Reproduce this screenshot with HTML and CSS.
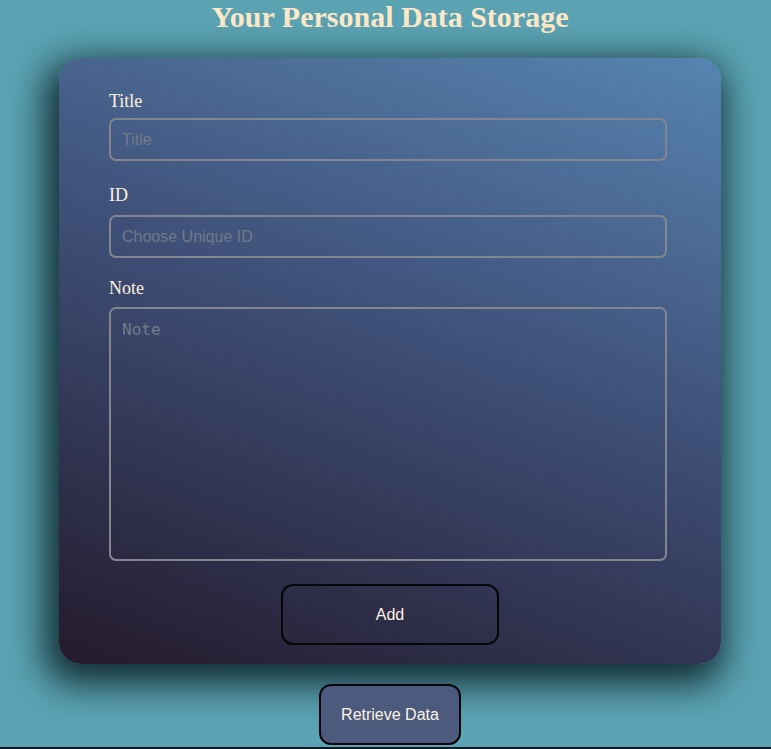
FILE: index.html
```html
<!DOCTYPE html>
<html>
<head>
<meta charset="utf-8">
<link rel="stylesheet" href="styles.css">
</head>
<body>
<div class="page">
  <h1 class="heading">Your Personal Data Storage</h1>
  <form class="card">
    <label class="label label-title" for="t">Title</label>
    <input class="field" id="t" type="text" placeholder="Title">
    <label class="label label-id" for="i">ID</label>
    <input class="field" id="i" type="text" placeholder="Choose Unique ID">
    <label class="label label-note" for="n">Note</label>
    <textarea class="note" id="n" placeholder="Note"></textarea>
    <div class="actions">
      <button type="button" class="btn-add">Add</button>
    </div>
  </form>
  <button type="button" class="btn-retrieve">Retrieve Data</button>
</div>
</body>
</html>
```
FILE: styles.css
```css
html, body {
  margin: 0;
  padding: 0;
}
body {
  background: #5ba3b3;
  height: 749px;
  overflow: hidden;
}
.page {
  height: 747px;
  padding-left: 9px;
  border-bottom: 2px solid #0d1a24;
  display: flex;
  flex-direction: column;
  align-items: center;
}
.heading {
  margin: 1px 0 0;
  font-family: "Liberation Serif", serif;
  font-weight: bold;
  font-size: 30px;
  line-height: 32px;
  color: #fde8c8;
}
.card {
  margin-top: 25px;
  width: 662px;
  height: 606px;
  box-sizing: border-box;
  padding: 32px 54px 0 50px;
  border-radius: 22px;
  background: linear-gradient(20deg, #241a2c 0%, #3c4b72 50%, #5784b1 100%);
  box-shadow: -6px 12px 36px 8px rgba(5, 22, 26, 0.85);
  display: flex;
  flex-direction: column;
}
.label {
  font-family: "Liberation Serif", serif;
  font-size: 18px;
  line-height: 22px;
  color: #fdf1dd;
}
.label-title { margin-bottom: 6px; }
.label-id { margin-top: 23px; margin-bottom: 9px; }
.label-note { margin-top: 19px; margin-bottom: 8px; }
.field {
  box-sizing: border-box;
  width: 558px;
  height: 43px;
  padding: 0 11px;
  border: 2px solid #83868e;
  border-radius: 7px;
  background: transparent;
  font-family: "Liberation Sans", Arial, sans-serif;
  font-size: 16px;
  color: #eee;
  outline: none;
}
.field::placeholder { color: #727a8c; }
.note {
  box-sizing: border-box;
  width: 558px;
  height: 254px;
  padding: 11px 11px;
  border: 2px solid #83868e;
  border-radius: 7px;
  background: transparent;
  font-family: "DejaVu Sans Mono", monospace;
  font-size: 16px;
  color: #eee;
  resize: none;
  outline: none;
}
.note::placeholder { color: #737a8a; }
.actions {
  display: flex;
  justify-content: center;
  margin-top: 23px;
  padding-left: 4px;
}
.btn-add {
  width: 218px;
  height: 61px;
  border: 2px solid #060608;
  border-radius: 12px;
  background: transparent;
  color: #fdf3e3;
  font-family: "Liberation Sans", Arial, sans-serif;
  font-size: 16px;
}
.btn-retrieve {
  margin-top: 20px;
  width: 142px;
  height: 61px;
  border: 2px solid #060608;
  border-radius: 12px;
  background: #4b5a7d;
  color: #fdf3e3;
  font-family: "Liberation Sans", Arial, sans-serif;
  font-size: 16px;
}
```
